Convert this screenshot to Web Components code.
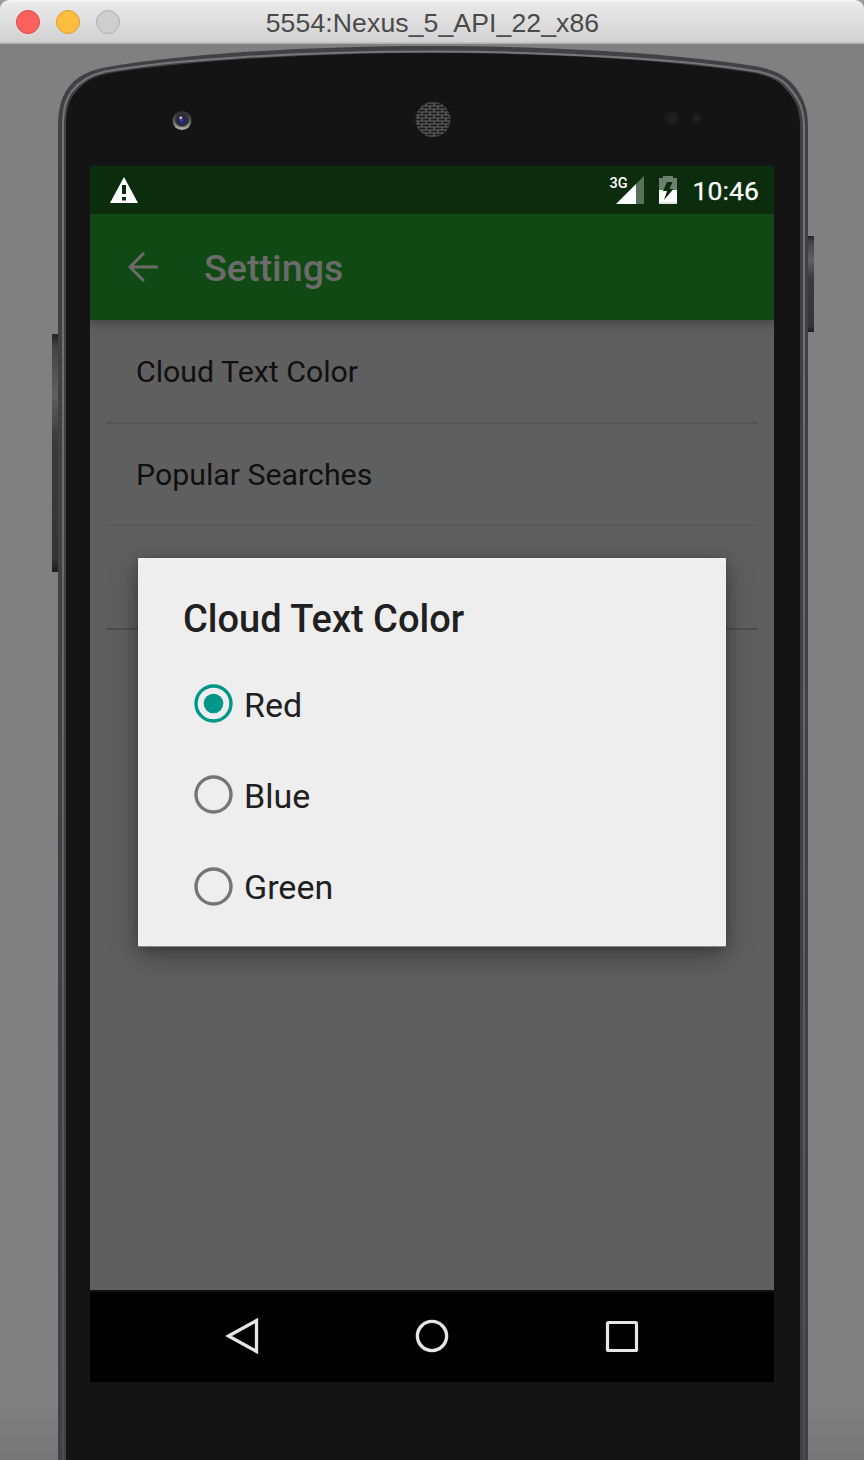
<!DOCTYPE html>
<html lang="en">
<head>
<meta charset="utf-8">
<title>5554:Nexus_5_API_22_x86</title>
<style>
html,body{margin:0;height:100%;overflow:hidden}
body{font-family:Roboto,sans-serif}
</style>
</head>
<body>
<emulator-window></emulator-window>
<script>
const define = (name, html) => customElements.define(name, class extends HTMLElement {
  constructor(){ super(); this.attachShadow({mode:'open'}).innerHTML = html; }
});

define('window-bar', `<style>
:host{box-sizing:border-box;display:grid;grid-template-columns:1fr auto 1fr;align-items:center;height:44px;padding:0 16px 0;
background:linear-gradient(#f6f6f6,#e9e9e9 3px,#d2d2d2 42px,#b0b0b0 43px);border-radius:9px 9px 0 0;font:26.600px "Liberation Sans",Arial,sans-serif;color:#4a4a4a}
.lights{display:flex;gap:16px}
i{box-sizing:border-box;width:24px;height:24px;border-radius:50%;border:1px solid}
.r{background:#fc615d;border-color:#df4744}.y{background:#fdbd41;border-color:#dd9f33}.g{background:#cecece;border-color:#b0b0b0}
span{padding:2px 0 0 1px;letter-spacing:.1px}
</style><div class="lights"><i class="r"></i><i class="y"></i><i class="g"></i></div><span><slot></slot></span>`);

define('device-shell', `<style>
:host{display:block;position:relative;height:1416px;background:linear-gradient(#808080 0,#808080 1360px,#767676 1416px);overflow:hidden}
svg{position:absolute;left:0;top:0;display:block}
.screen{position:relative;margin:122px 90px 0}
</style>
<svg width="864" height="1416" viewBox="0 44 864 1416">
<defs>
<linearGradient id="btn" x1="0" y1="0" x2="0" y2="1"><stop offset="0" stop-color="#222"/><stop offset=".06" stop-color="#444"/><stop offset=".25" stop-color="#606060"/><stop offset=".45" stop-color="#3a3a3a"/><stop offset=".94" stop-color="#353535"/><stop offset="1" stop-color="#1c1c1c"/></linearGradient>
<linearGradient id="rim" x1="0" x2="0" y1="0" y2="1"><stop offset="0" stop-color="#77777a"/><stop offset=".45" stop-color="#68686b"/><stop offset="1" stop-color="#4c4d50"/></linearGradient>
<pattern id="mesh" width="8" height="6" patternUnits="userSpaceOnUse"><path d="M0 1H8M0 4H8M2 1V4M6 4V7M6 -2V1" stroke="#666" stroke-width="1.100"/></pattern>
<linearGradient id="ring" x1="0" x2="0" y1="0" y2="1"><stop offset="0" stop-color="#2c2c2c"/><stop offset=".5" stop-color="#555"/><stop offset="1" stop-color="#b8b8b8"/></linearGradient>
<radialGradient id="lens"><stop offset="0" stop-color="#4545b0"/><stop offset=".55" stop-color="#23237a"/><stop offset="1" stop-color="#2a2a2e"/></radialGradient>
</defs>
<rect x="52" y="334" width="8" height="238" fill="url(#btn)"/>
<rect x="806" y="236" width="8" height="96" fill="url(#btn)"/>
<path d="M58 1462V122C59 104 63 95 68 88C76 77 86 72 102 68C170 55 300 46 432 46S690 55 760 67C777 71 787 76 796 88C804 99 808 110 808 126V1462Z" fill="#414143"/>
<path d="M63 1462V122C64 104 67 98 72 91C80 81 90 75 105 71.500C173 59.500 300 51.500 432 51.500S690 60 758 71.500C774 75 784 80 791 90C800 100 803.500 110 804 126V1462" fill="none" stroke="url(#rim)" stroke-width="2"/>
<path d="M66 1462V122C67 105 70 99 75 93C82 84 91 77 106 74C174 62 300 53 432 53S690 62 756 73.500C771 77 781 82 788 92C797 102 800 112 800 126V1462Z" fill="#141414"/>
<circle cx="182" cy="120.500" r="9.500" fill="url(#ring)"/><circle cx="182" cy="120" r="6.800" fill="#2f2f33"/><circle cx="181.500" cy="120.500" r="4.500" fill="url(#lens)"/><circle cx="180.800" cy="117.800" r="1.500" fill="#b4b8d0"/>
<circle cx="433" cy="119.500" r="17.500" fill="#1d1d1d"/><circle cx="433" cy="119.500" r="17.500" fill="url(#mesh)"/>
<circle cx="671.500" cy="118" r="7" fill="#1d1c1c"/><circle cx="672.500" cy="119" r="2.500" fill="#2a211f"/><circle cx="696.500" cy="118" r="4.500" fill="#1e1c1c"/><circle cx="696.500" cy="118" r="2" fill="#2b2220"/>
</svg>
<div class="screen"><slot></slot></div>`);

define('status-bar', `<style>
:host{box-sizing:border-box;display:flex;align-items:center;height:48px;padding:0 15px 0 20px;background:#0b2d0e;color:#fff;font-size:26.500px;line-height:48px;-webkit-text-stroke:.25px}
svg{display:block;overflow:visible}.warn{margin-right:auto}.signal{margin-right:15px}.battery{margin-right:16px}
.time{padding-top:2px;letter-spacing:.1px}
</style>
<svg class="warn" width="28" height="26" viewBox="0 0 28 26"><path d="M14 0L28 26H0ZM12 8V17H16V8ZM12 20V23.500H16V20Z" fill="#fff" fill-rule="evenodd"/></svg>
<svg class="signal" width="35" height="28" viewBox="-1 0 35 28"><path d="M34 0V28H26V8Z" fill="#57725a"/><path d="M6 28L26 8V28Z" fill="#fff"/><text x="-.5" y="12" font-family="Roboto,sans-serif" font-size="14.500" font-weight="500" fill="#fff">3G</text></svg>
<svg class="battery" width="18" height="28" viewBox="0 0 18 28"><path d="M4 0H14V2H18V28H0V2H4Z" fill="#6c816e"/><path d="M0 14H18V26H0Z" fill="#fff"/><path d="M0 26H18V28H0Z" fill="#dce2dc"/><path d="M13.500 6H8L4 15H8L5 24L14.500 13H10.500Z" fill="#0b2d0e"/></svg>
<span class="time">10:46</span>`);

define('app-toolbar', `<style>
:host{box-sizing:border-box;position:relative;z-index:1;display:flex;align-items:center;gap:46px;height:106px;padding-left:38px;background:#104913;color:#6b6b6b;font-size:37.700px;font-weight:500;box-shadow:0 3px 12px #0005;clip-path:inset(0 0 -24px 0)}
svg{display:block}.t{padding-top:2px}
</style><svg width="30" height="30" viewBox="0 0 30 30" fill="none" stroke="#6b6b6b" stroke-width="3"><path d="M30 15H2M16 1L2 15L16 29"/></svg><span class="t"><slot></slot></span>`);

define('pref-row', `<style>
:host{box-sizing:border-box;display:flex;align-items:center;height:var(--h,103px);margin:0 16px;padding:1px 30px 0;border-bottom:2px solid var(--line,#555);font-size:30.300px;color:#101010}
</style><span><slot></slot></span>`);

define('radio-option', `<style>
:host{display:flex;align-items:center;height:91.300px;gap:11px;font-size:34px;color:#202020}
svg{display:block;margin-bottom:2px}.dot{display:none}circle.ring{stroke:#757575}
:host([checked]) .ring{stroke:#009688}:host([checked]) .dot{display:block}
</style><svg width="39" height="39" viewBox="0 0 39 39"><circle class="ring" cx="19.500" cy="19.500" r="17.500" fill="none" stroke-width="3.400"/><circle class="dot" cx="19.500" cy="19.500" r="9.800" fill="#009688"/></svg><span><slot></slot></span>`);

define('choice-dialog', `<style>
:host{box-sizing:border-box;position:absolute;z-index:2;left:48px;top:392px;width:588px;height:388px;background:#eee;border-radius:1px;padding:38px 46px 0;box-shadow:0 1px 0 #888,0 10px 28px #0005,0 2px 12px #0003}
h1{margin:0 0 17px -1px;font-size:38px;line-height:46px;font-weight:500;color:#202020}
.options{display:flex;flex-direction:column;padding-left:10px}
</style><h1><slot name="title"></slot></h1><div class="options"><slot></slot></div>`);

define('nav-bar', `<style>
:host{box-sizing:border-box;display:flex;align-items:center;justify-content:space-between;height:92px;padding:0 135px 2px;background:#000;border-top:2px solid #111}
svg{display:block}
</style>
<svg width="34" height="36" viewBox="0 0 34 36" fill="none" stroke="#e6e6e6" stroke-width="3.300"><path d="M3.500 18L31.500 2.500V33.500Z"/></svg>
<svg width="34" height="34" viewBox="0 0 34 34" fill="none" stroke="#e6e6e6" stroke-width="3.400"><circle cx="17" cy="17" r="14.600"/></svg>
<svg width="34" height="34" viewBox="0 0 34 34" fill="none" stroke="#e6e6e6" stroke-width="3.200"><rect x="2.500" y="3.500" width="29" height="28" rx="1"/></svg>`);

define('phone-screen', `<style>
:host{display:flex;flex-direction:column;position:relative;height:1216px;background:#5f5f5f;overflow:hidden}
.list{flex:1}.tall{--h:104px}.faint{--h:102px;--line:#595959}
</style>
<status-bar></status-bar><app-toolbar>Settings</app-toolbar>
<div class="list"><pref-row class="tall">Cloud Text Color</pref-row><pref-row class="faint">Popular Searches</pref-row><pref-row class="tall" style="--line:#4e4e4e"></pref-row></div>
<nav-bar></nav-bar>
<choice-dialog><span slot="title">Cloud Text Color</span><radio-option checked>Red</radio-option><radio-option>Blue</radio-option><radio-option>Green</radio-option></choice-dialog>`);

define('emulator-window', `<style>:host{display:block;width:864px;height:1460px;background:#9a9a9a}</style>
<window-bar>5554:Nexus_5_API_22_x86</window-bar><device-shell><phone-screen></phone-screen></device-shell>`);
</script>
</body>
</html>
